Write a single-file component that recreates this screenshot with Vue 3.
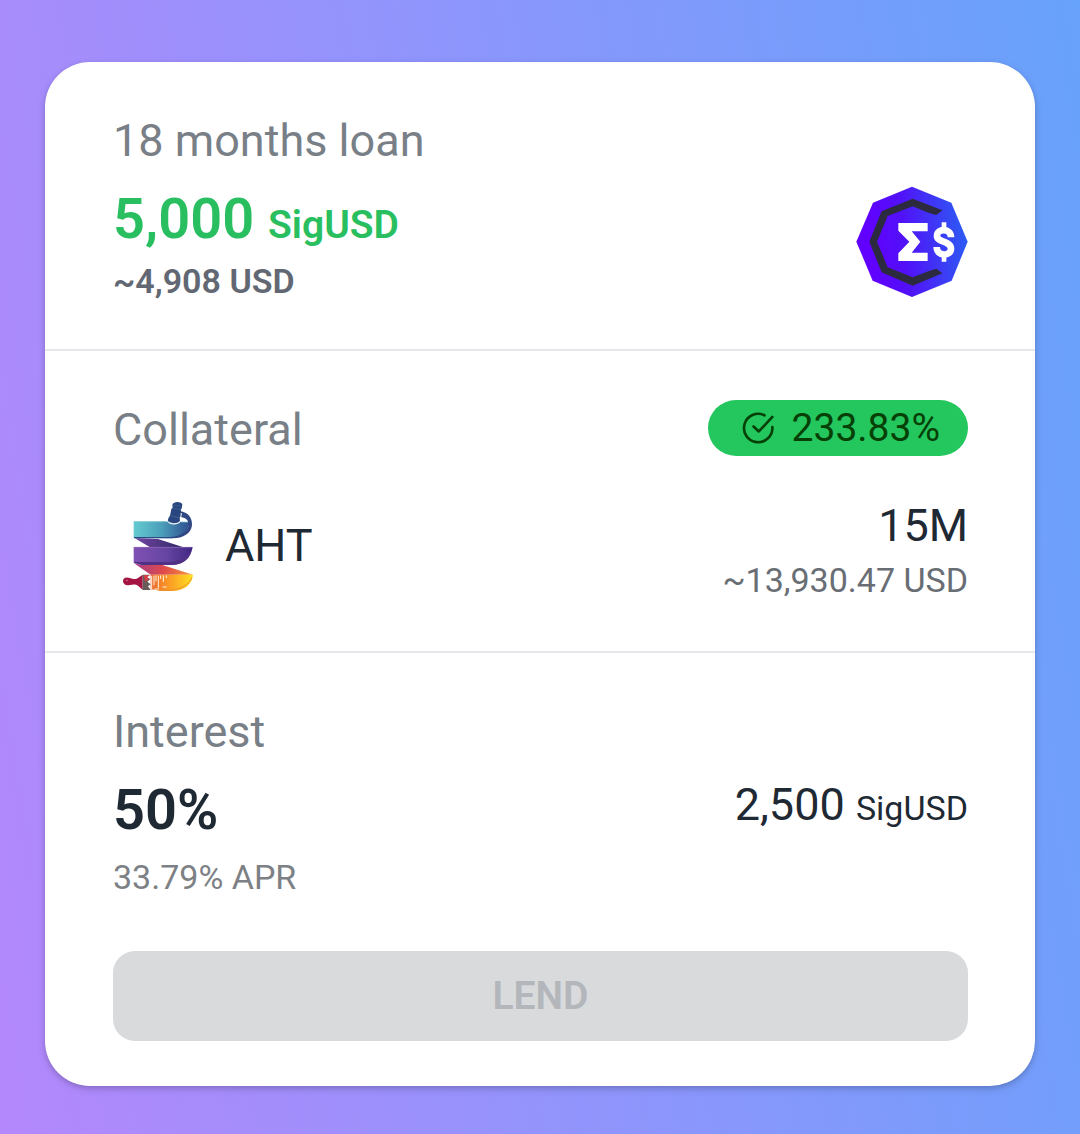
<script setup>
import { reactive } from 'vue';

const loan = reactive({
    period: '18 months',
    amount: '5,000',
    token: 'SigUSD',
    value: '~4,908 USD',
});

const collateral = reactive({
    ratio: '233.83%',
    token: 'AHT',
    amount: '15M',
    value: '~13,930.47 USD',
});

const interest = reactive({
    percent: '50%',
    apr: '33.79% APR',
    amount: '2,500',
});
</script>

<template>
    <main class="page">
        <article class="card">
            <section class="section summary">
                <h2 class="label">{{ loan.period }} loan</h2>
                <div class="row center">
                    <div>
                        <p class="big green">{{ loan.amount }} <span class="token">{{ loan.token }}</span></p>
                        <p class="small strong">{{ loan.value }}</p>
                    </div>
                    <svg class="token-logo" viewBox="47 48 336 336" aria-hidden="true">
                        <defs>
                            <linearGradient id="sig" x1="0" y1="0.55" x2="1" y2="0.45">
                                <stop offset="0.1" stop-color="#6200ff" />
                                <stop offset="0.42" stop-color="#5210f8" />
                                <stop offset="1" stop-color="#2c5cf4" />
                            </linearGradient>
                        </defs>
                        <path fill="url(#sig)" d="M215 50 333 98 382 215 334 332 215 381 97 332 48 215 98 98Z" />
                        <path fill="#2c2a3e" d="M217 86 306 121 288 135 264 128 217 109 142 138 110 215 142 292 217 322 266 303 288 296 306 310 217 347 124 307 87 215 124 124Z" />
                        <path fill="#fff" d="M174 159H262V184H214L240 215 214 248H262V273H174V250L207 215 174 182Z" />
                        <path fill="none" stroke="#fff" stroke-width="20" d="M332 202C332 174 290 174 290 197 290 219 332 211 332 236 332 260 289 260 289 231" />
                        <path fill="none" stroke="#fff" stroke-width="14" d="M311 157V180M311 253V275" />
                    </svg>
                </div>
            </section>

            <section class="section">
                <div class="row">
                    <h2 class="label">Collateral</h2>
                    <span class="badge">
                        <svg class="check" viewBox="120 63 100 100" aria-hidden="true">
                            <path d="M188 73A43 43 0 1 0 212 109M155 107 171 122 212 78" />
                        </svg>
                        {{ collateral.ratio }}
                    </span>
                </div>
                <div class="row center assets">
                    <div class="asset">
                        <svg class="asset-logo" viewBox="9 36 270 270" aria-hidden="true">
                            <defs>
                                <linearGradient id="teal">
                                    <stop offset="0" stop-color="#64cbd0" />
                                    <stop offset="0.5" stop-color="#4b9fba" />
                                    <stop offset="1" stop-color="#304f91" />
                                </linearGradient>
                                <linearGradient id="violet">
                                    <stop offset="0" stop-color="#8050b4" />
                                    <stop offset="0.55" stop-color="#6646a2" />
                                    <stop offset="1" stop-color="#402783" />
                                </linearGradient>
                                <linearGradient id="fold1">
                                    <stop offset="0" stop-color="#7446a3" />
                                    <stop offset="1" stop-color="#302967" />
                                </linearGradient>
                                <linearGradient id="fold2">
                                    <stop offset="0" stop-color="#a33e8a" />
                                    <stop offset="0.5" stop-color="#df4a4c" />
                                    <stop offset="1" stop-color="#f79a37" />
                                </linearGradient>
                                <linearGradient id="fire">
                                    <stop offset="0" stop-color="#ec672d" />
                                    <stop offset="0.45" stop-color="#fb9d26" />
                                    <stop offset="1" stop-color="#ffe221" />
                                </linearGradient>
                            </defs>
                            <path fill="url(#fold1)" d="M72 146 144 150 218 174H119Z" />
                            <path fill="url(#fold2)" d="M71 222 95 228H157L249 257H122Z" />
                            <path fill="url(#teal)" d="M71 97H176C184 108 203 105 210 98L238 99C237 130 215 146 184 148H71Z" />
                            <path fill="#304783" d="M209 67C235 70 247 86 246 109 243 134 220 148 188 148L72 147V144H181C218 141 237 123 236 105 234 91 225 84 207 85Z" />
                            <path fill="none" stroke="#91d6da" stroke-width="2" d="M72 98H176M214 99H234" />
                            <path fill="url(#violet)" d="M71 174H248C243 206 223 228 183 228H96L71 221Z" />
                            <path fill="#503184" d="M72 219H184C211 215 232 202 244 186 235 213 215 228 183 228H96L72 221Z" />
                            <path fill="none" stroke="#9a70b8" stroke-width="2" d="M72 175H245" />
                            <path fill="url(#fire)" d="M122 257H249C246 285 226 304 189 306 164 307 145 305 122 301Z" />
                            <path fill="none" stroke="#ee8f27" stroke-width="3" d="M143 303C191 309 231 298 246 266" />
                            <path fill="none" stroke="#fff2dc" stroke-width="3" d="M125 261V300M132 260V289M138 259V277M145 260V297M152 259V270M160 259V279M169 259V267M133 300H147M158 294H170" />
                            <path fill="#a51543" d="M39 277C38 266 49 263 60 267 72 272 79 271 85 266L98 257V303L85 291C77 285 70 286 60 288 49 291 40 287 39 277Z" />
                            <path fill="#695b57" d="M98 257H119L110 265 121 270 112 278 122 286 114 292 122 303H98Z" />
                            <path fill="#db3f43" d="M102 259H121L111 264 118 269 105 278Z" />
                            <circle cx="51" cy="274" r="2" fill="#e5a5b2" />
                            <path fill="#29477e" d="M187 47C191 37 212 37 217 46L215 59 212 61 214 68 209 85 210 96C203 106 178 104 173 94L177 84 180 80 184 60 188 56Z" />
                            <path fill="none" stroke="#5f82aa" stroke-width="1" d="M191 48 213 51M188 58 210 61M181 81 207 86" />
                            <path fill="none" stroke="#fff" stroke-width="3" d="M172 97C181 108 202 107 211 98L214 72" />
                        </svg>
                        <span class="medium">{{ collateral.token }}</span>
                    </div>
                    <div class="right">
                        <p class="medium">{{ collateral.amount }}</p>
                        <p class="small muted">{{ collateral.value }}</p>
                    </div>
                </div>
            </section>

            <section class="section">
                <h2 class="label">Interest</h2>
                <div class="row">
                    <div>
                        <p class="big">{{ interest.percent }}</p>
                        <p class="small faint apr">{{ interest.apr }}</p>
                    </div>
                    <p class="medium">{{ interest.amount }} <span class="small">{{ loan.token }}</span></p>
                </div>
                <button class="lend" type="button" disabled>LEND</button>
            </section>
        </article>
    </main>
</template>

<style>
body {
    margin: 0;
}
</style>

<style scoped>
.page {
    box-sizing: border-box;
    min-height: 100vh;
    padding: 62px 45px 48px;
    background: linear-gradient(80deg, #b488fc, #67a2fb);
    font-family: Roboto, sans-serif;
    color: #1f2933;
}

.card {
    border-radius: 45px;
    background: #fff;
    box-shadow: 0 3px 8px rgba(0, 0, 0, 0.14), 0 2px 4px rgba(0, 0, 0, 0.1);
}

.section {
    padding: 45px 67px 51px 68px;
}

.section + .section {
    border-top: 2px solid #e5e7eb;
}

.section.summary {
    padding-bottom: 48px;
}

.section:last-child {
    padding-bottom: 45px;
}

h2,
p {
    margin: 0;
}

.row {
    display: flex;
    justify-content: space-between;
    align-items: flex-start;
    margin-top: 5px;
}

.row:first-child {
    margin-top: 0;
}

.row.center {
    align-items: center;
}

.summary .row {
    margin-top: 8px;
}

.label {
    font-size: 45px;
    line-height: 68px;
    font-weight: 400;
    color: #797f87;
}

.big {
    font-size: 56px;
    line-height: 79px;
    font-weight: 600;
}

.medium {
    font-size: 45px;
    line-height: 68px;
}

.small {
    font-size: 34px;
    line-height: 40px;
}

.token {
    font-size: 39px;
}

.green {
    line-height: 72px;
    color: #29bf60;
}

.strong {
    font-weight: 600;
    color: #626873;
}

.muted {
    color: #696e74;
}

.faint {
    color: #7d8185;
}

.token-logo {
    width: 112px;
    height: 112px;
}

.badge {
    display: flex;
    align-items: center;
    gap: 17px;
    margin-top: 4px;
    padding: 0 28px 0 34px;
    border-radius: 28px;
    background: #24c65e;
    color: #064006;
    font-size: 39px;
    line-height: 56px;
}

.check {
    width: 33px;
    height: 33px;
    fill: none;
    stroke: currentColor;
    stroke-width: 8;
    stroke-linecap: round;
    stroke-linejoin: round;
}

.row.assets {
    margin-top: 28px;
}

.asset {
    display: flex;
    align-items: center;
    gap: 22px;
}

.asset-logo {
    width: 90px;
    height: 90px;
}

.right {
    text-align: right;
}

.apr {
    margin-top: 7px;
}

.lend {
    display: block;
    width: 100%;
    height: 90px;
    margin-top: 54px;
    border: 0;
    border-radius: 22px;
    background: #d9dadc;
    color: #b3b6ba;
    font-family: inherit;
    font-size: 39px;
    font-weight: 600;
}
</style>
